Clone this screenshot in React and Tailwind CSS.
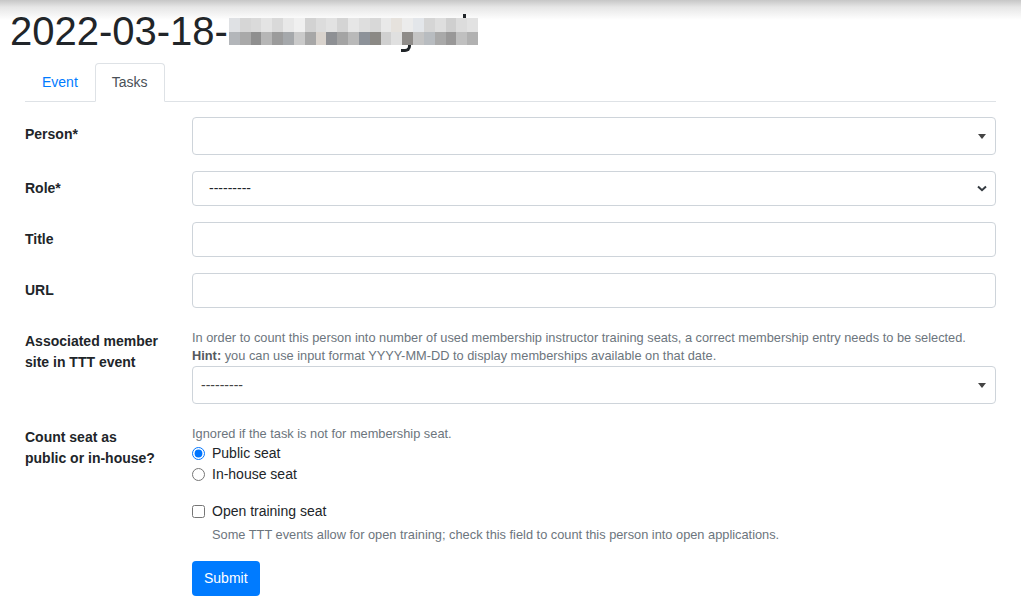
import { useState } from 'react'

const TOP_ROW = ['#dfe1e4', '#d6d6d6', '#dadada', '#e4e4e4', '#d9d9d9', '#e8e8e8', '#f0f0f0', '#d2d2d2', '#dcdcdc', '#e2e2e2', '#d4d4d4', '#e6e6e6', '#dedede', '#d8d8d8', '#e9e9e9', '#e6e2dd', '#ececec', '#e3e6ea', '#d5d5d5', '#dedede', '#cfcfcf', '#dcdcdc', '#e2e2e2']
const BOTTOM_ROW = ['#b3b6ba', '#a9a9a9', '#8f8f8f', '#b6b6b6', '#9b9b9b', '#a5a8ab', '#cacaca', '#a7a7a7', '#d9d3cd', '#8e9094', '#a4a4a4', '#b9b9b9', '#8d9299', '#8b8985', '#d0d0d0', '#e0e0e0', '#8f8c89', '#c4c4c4', '#b8bcc0', '#a9a9a9', '#999898', '#c0c0c0', '#b1b1b1']

function Mosaic() {
  return (
    <div className="relative mt-[11px] ml-[1px] flex flex-col w-[249px]">
      <div className="flex h-[14px]">
        {TOP_ROW.map((c, i) => (
          <div key={i} className="flex-1" style={{ background: c }} />
        ))}
      </div>
      <div className="flex h-[13px]">
        {BOTTOM_ROW.map((c, i) => (
          <div key={i} className="flex-1" style={{ background: c }} />
        ))}
      </div>
      {/* bits of the blurred letters that stick out */}
      <div className="absolute left-[172px] top-[27px] w-[10px] h-[7px] border-b-[3px] border-r-[3px] border-[#212529] rounded-br-[6px]" />
      <div className="absolute left-[234px] top-[-4px] w-[3px] h-[4px] bg-[#212529]" />
    </div>
  )
}

function Select2({ value }) {
  return (
    <div className="h-[38px] border border-[#ced4da] rounded-[4px] bg-white flex items-center pl-[8px] pr-[9px]">
      <span className="flex-1 text-[14px] text-[#444]">{value}</span>
      <span className="w-0 h-0 border-x-[4px] border-x-transparent border-t-[5px] border-t-[#444]" />
    </div>
  )
}

function TextInput() {
  return <input type="text" className="w-full h-[35px] border border-[#ced4da] rounded-[4px] px-[12px] outline-none" />
}

function Label({ children }) {
  return <label className="font-bold text-[14px] leading-[21px] pt-[7px]">{children}</label>
}

export default function App() {
  const [seat, setSeat] = useState('public')
  const [open, setOpen] = useState(false)

  return (
    <div className="min-h-screen bg-[linear-gradient(to_bottom,#c6c6c6_0px,#e6e6e6_7px,#ffffff_20px)] font-['Liberation_Sans',Arial,sans-serif] text-[14px] leading-[21px] text-[#212529]">
      <h1 className="flex items-start pl-[10px] pt-[7px] text-[40px] leading-[48px] font-normal">
        <span>2022-03-18-</span>
        <Mosaic />
      </h1>

      <ul className="mx-[25px] mt-[8px] flex border-b border-[#dee2e6]">
        <li className="-mb-px">
          <a className="block px-[16px] py-[8px] border border-transparent text-[#007bff]">Event</a>
        </li>
        <li className="-mb-px">
          <a className="block px-[16px] py-[8px] border border-[#dee2e6] border-b-white rounded-t-[4px] bg-white text-[#495057]">Tasks</a>
        </li>
      </ul>

      <form className="mt-[15px] px-[25px] grid grid-cols-[135px_1fr] gap-x-[32px] gap-y-[16px]">
        <Label>Person*</Label>
        <Select2 value="" />

        <Label>Role*</Label>
        <div className="h-[35px] border border-[#ced4da] rounded-[4px] bg-white flex items-center pl-[16px] pr-[8px]">
          <span className="flex-1">---------</span>
          <svg width="10" height="7" viewBox="0 0 10 7">
            <path d="M1 1.5 L5 5.2 L9 1.5" fill="none" stroke="#343a40" strokeWidth="2" />
          </svg>
        </div>

        <Label>Title</Label>
        <TextInput />

        <Label>URL</Label>
        <TextInput />

        <Label>Associated member site in TTT event</Label>
        <div>
          <div className="pt-[5px] text-[12.8px] leading-[18px] text-[#6c757d]">
            <p>In order to count this person into number of used membership instructor training seats, a correct membership entry needs to be selected.</p>
            <p><b className="text-[#55595e]">Hint:</b> you can use input format YYYY-MM-DD to display memberships available on that date.</p>
          </div>
          <div className="mt-[1px]">
            <Select2 value="---------" />
          </div>
        </div>

        <Label>Count seat as public or in-house?</Label>
        <div>
          <p className="pt-[5px] text-[12.8px] leading-[18px] text-[#6c757d]">Ignored if the task is not for membership seat.</p>
          <label className="flex items-center gap-[7px]">
            <input type="radio" name="seat" checked={seat === 'public'} onChange={() => setSeat('public')} className="m-0 w-[13px] h-[13px]" />
            Public seat
          </label>
          <label className="flex items-center gap-[7px]">
            <input type="radio" name="seat" checked={seat === 'inhouse'} onChange={() => setSeat('inhouse')} className="m-0 w-[13px] h-[13px]" />
            In-house seat
          </label>

          <label className="mt-[16px] flex items-center gap-[7px]">
            <input type="checkbox" checked={open} onChange={() => setOpen(!open)} className="m-0 w-[13px] h-[13px]" />
            Open training seat
          </label>
          <p className="mt-[4px] pl-[20px] text-[12.8px] leading-[18px] text-[#6c757d]">
            Some TTT events allow for open training; check this field to count this person into open applications.
          </p>

          <button type="button" className="mt-[17px] h-[35px] px-[12px] rounded-[4px] bg-[#007bff] text-white text-[14px]">
            Submit
          </button>
        </div>
      </form>
    </div>
  )
}
